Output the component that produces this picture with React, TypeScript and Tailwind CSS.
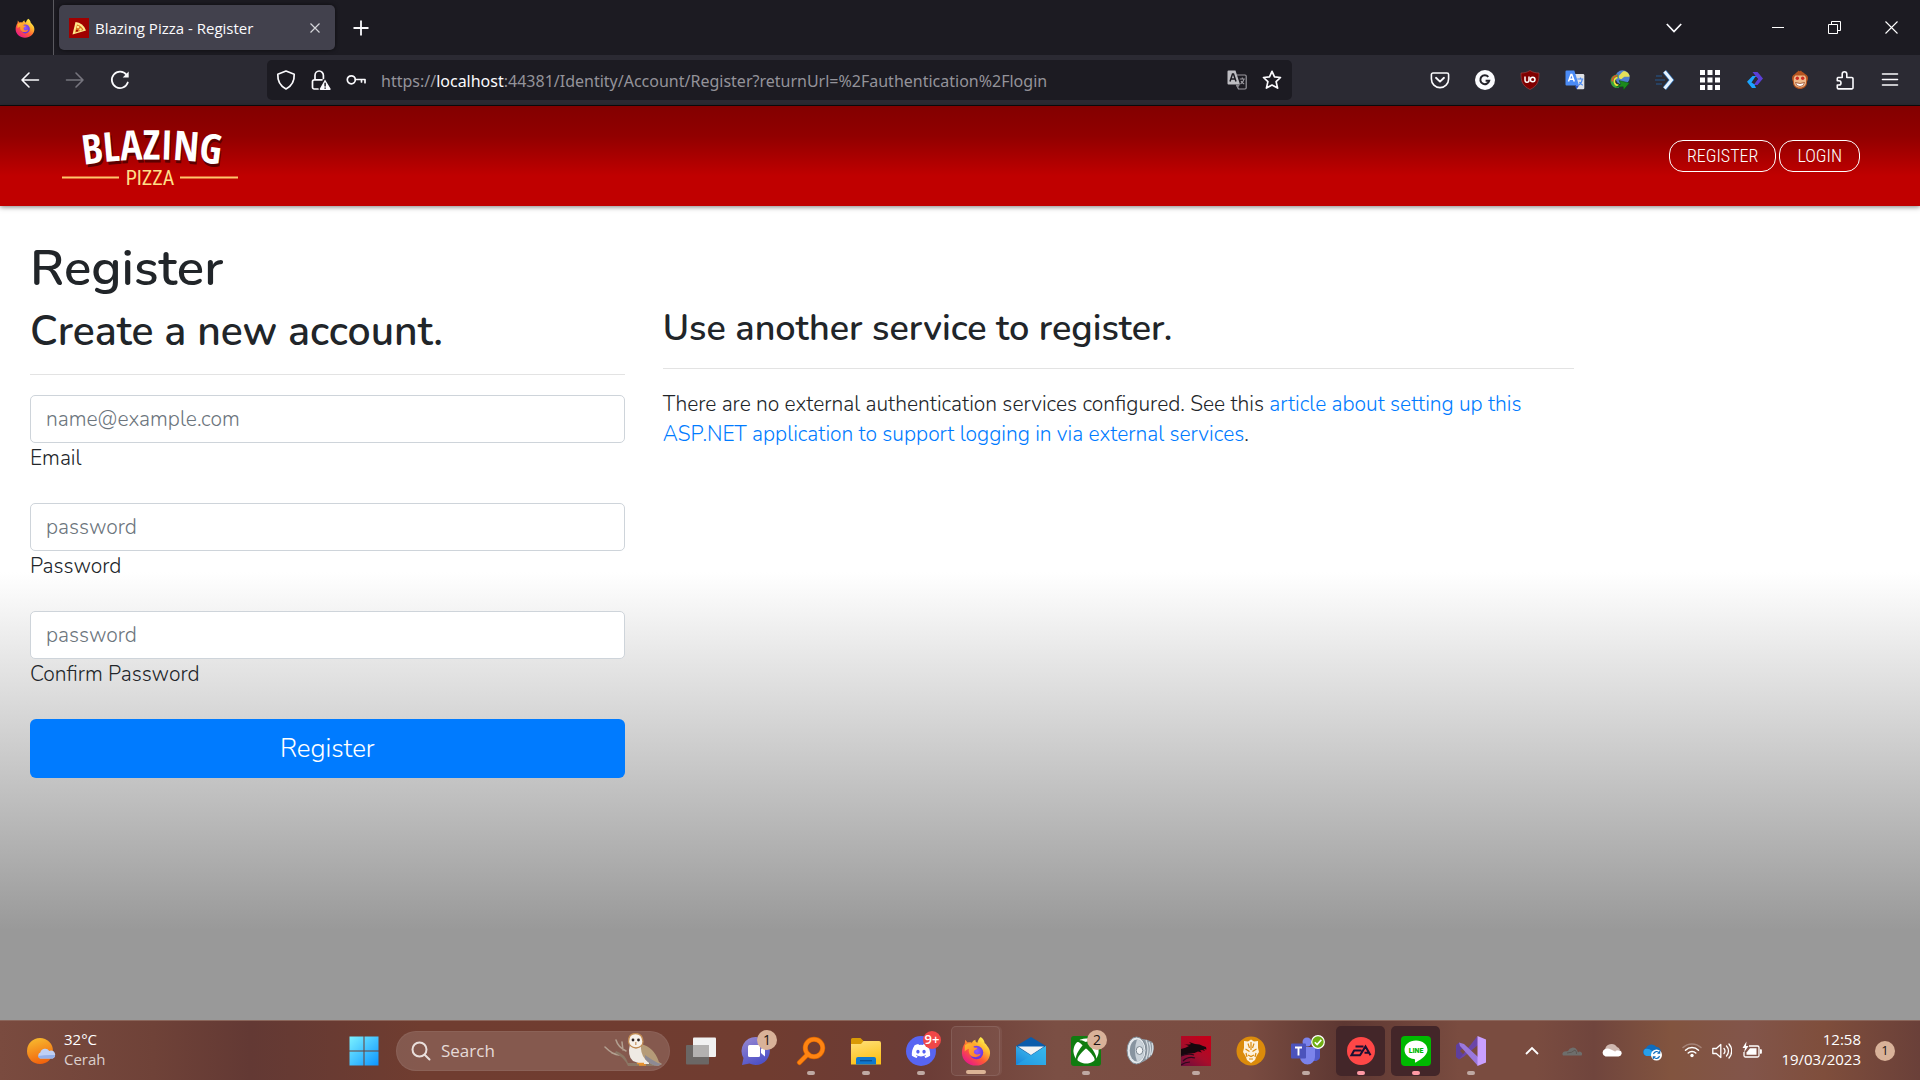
import React from "react";
import type { ReactNode } from "react";
import { FaDiscord, FaXbox } from "react-icons/fa";

const ICON = "h-5 w-5 shrink-0";

/* ---------- Browser icons ---------- */

function FirefoxIcon({ id, className }: { id: string; className: string }) {
  return (
    <svg viewBox="0 0 32 32" className={className} aria-hidden="true">
      <defs>
        <linearGradient id={id + "a"} x1="0.85" y1="0.1" x2="0.2" y2="0.95">
          <stop offset="0" stopColor="#fff44f" />
          <stop offset="0.3" stopColor="#ffb52e" />
          <stop offset="0.6" stopColor="#ff5a36" />
          <stop offset="1" stopColor="#e8178a" />
        </linearGradient>
        <radialGradient id={id + "b"} cx="0.5" cy="0.4" r="0.7">
          <stop offset="0" stopColor="#9059ff" />
          <stop offset="1" stopColor="#5b2bd8" />
        </radialGradient>
        <linearGradient id={id + "c"} x1="0" y1="0" x2="0.8" y2="1">
          <stop offset="0" stopColor="#ffbd2e" />
          <stop offset="1" stopColor="#ff7a2e" />
        </linearGradient>
      </defs>
      <path d="M21 1c2.500 1.700 4 4 4.300 6.800 1.300.700 2 1.700 2.400 2.700C29.600 12.500 31 15 31 18c0 7.600-6.700 13.500-15 13.500S1 25.500 1 18c0-4 1-7 3-10l.500-4 2.500 3c1.500-.600 3-.400 4.600.100C12.500 5.500 13.600 4.600 15.500 4c-.5 1.500.2 2.500 2 3.300C18 5 19 2.800 21 1z" fill={"url(#" + id + "a)"} />
      <circle cx="16.500" cy="17.500" r="7.200" fill={"url(#" + id + "b)"} />
      <path d="M4 10c2.500-2.200 5-2.600 7.500-1.600 1.500-.6 3.500-.4 4.500.6-1.500.5-2.500 1.500-2.800 2.600 1 .9 3 .7 4.300.9-.3 1.600-2.500 2-3.500 3.200-.8 1.500.2 3.800 2.500 4.100 2 .2 3-1.100 4.500-.8-1 2.500-4 3.800-6.500 3.500-5-.500-7-5-6-9-1.800.5-3 1.500-4.500 3z" fill={"url(#" + id + "c)"} />
    </svg>
  );
}

function PizzaFavicon() {
  return (
    <svg viewBox="0 0 20 20" className={ICON} aria-hidden="true">
      <rect width="20" height="20" fill="#a00000" />
      <path d="M6.500 4 Q14 4.500 17 12.500 L3.500 16.500 Z" fill="#ffe88a" />
      <path d="M8 6.500 Q12.500 7.500 14.500 12 L6 14.500 Z" fill="#d9741f" />
      <circle cx="9" cy="9" r="1.300" fill="#ffe88a" />
      <circle cx="11.500" cy="11.500" r="1.200" fill="#ffe88a" />
      <circle cx="8" cy="12.800" r="1" fill="#9c0000" />
    </svg>
  );
}

function Line({ d, w = 1.6, color = "#fbfbfe", children }: { d: string; w?: number; color?: string; children?: ReactNode }) {
  return (
    <svg viewBox="0 0 20 20" className={ICON} fill="none" stroke={color} strokeWidth={w} strokeLinecap="round" strokeLinejoin="round" aria-hidden="true">
      <path d={d} />
      {children}
    </svg>
  );
}

const BackIcon = () => <Line d="M18.500 10H2M9 3 2 10l7 7" />;
const ForwardIcon = () => <Line d="M1.500 10H18M11 3l7 7-7 7" color="#76757e" />;
const ReloadIcon = () => (
  <Line d="M17.800 12.500A8.200 8.200 0 1 1 16.500 4.800" w={1.8}>
    <path d="M18.700 1.500v6h-6z" fill="#fbfbfe" stroke="none" />
  </Line>
);
const ShieldIcon = () => <Line d="M10 1 1.800 4.200C1.500 10 3.500 15.500 10 19c6.500-3.500 8.500-9 8.200-14.800z" w={1.7} />;
const LockWarnIcon = () => (
  <svg viewBox="0 0 20 20" className={ICON} fill="none" stroke="#fbfbfe" strokeWidth="1.700" strokeLinecap="round" strokeLinejoin="round" aria-hidden="true">
    <path d="M7 19H3.200A1.700 1.700 0 0 1 1.500 17.300V11.500A1.700 1.700 0 0 1 3.200 9.800H11M4 9.500V5.500a4.200 4.500 0 0 1 8.400 0v3" />
    <path d="M14 9.500 8.800 18.700a.8.800 0 0 0 .7 1.200h9.400a.8.800 0 0 0 .7-1.200z" fill="#fbfbfe" stroke="none" />
    <path d="M14.100 13.200v2.800M14.100 18v.2" stroke="#1c1b22" strokeWidth="1.500" />
  </svg>
);
const KeyIcon = () => (
  <Line d="M9.500 9.500H19v3.200M15.500 9.500v2.500" w={1.7}>
    <circle cx="5.300" cy="9.800" r="4" />
  </Line>
);
const PageTranslateIcon = () => (
  <svg viewBox="0 0 20 20" className={ICON} aria-hidden="true">
    <path d="M10 5h8a1.200 1.200 0 0 1 1.200 1.200v11.600A1.200 1.200 0 0 1 18 19h-6.500l-2-4" fill="none" stroke="#9b9aa0" strokeWidth="1.200" />
    <path d="M1.500.500h7L13 14.500H1.500a1 1 0 0 1-1-1v-12a1 1 0 0 1 1-1z" fill="#bdbdc2" />
    <path d="M9 14.500h4L10.500 18.500z" fill="#88878e" />
    <path d="M3 11.500 5.500 4h1L9 11.500M4 9h4" fill="none" stroke="#1c1b22" strokeWidth="1.500" />
    <path d="M12.800 9h5M15.300 7.500V9M17 9c-.3 2.500-2 4-3.500 5M14 11c.6 1.300 1.800 2.300 3.200 3" fill="none" stroke="#9b9aa0" strokeWidth="1.100" />
  </svg>
);
const StarIcon = () => <Line d="M10 1.300l2.500 5.500 6 .7-4.400 4.100 1.500 6.500L10 15l-5.600 3.100 1.500-6.500L1.500 7.500l6-.7z" w={1.7} />;
const PocketIcon = () => (
  <Line d="M3 3h14a1.600 1.600 0 0 1 1.600 1.600v4.400a8.600 8.600 0 0 1-17.200 0V4.600A1.600 1.600 0 0 1 3 3z" w={1.6}>
    <path d="M6 7.800l4 3.800 4-3.800" strokeWidth="1.900" />
  </Line>
);
const GrammarlyIcon = () => (
  <svg viewBox="0 0 20 20" className={ICON} aria-hidden="true">
    <circle cx="10" cy="10" r="10" fill="#fbfbfe" />
    <path d="M13.300 6.800A4.500 4.500 0 1 0 14.200 10.800H10.600" fill="none" stroke="#222129" strokeWidth="2" />
  </svg>
);
const UblockIcon = () => (
  <svg viewBox="0 0 20 20" className={ICON} aria-hidden="true">
    <path d="M10 .500C7 2.500 4 3 1 3c0 8 1 12.500 9 16.500C18 15.500 19 11 19 3c-3 0-6-.500-9-2.500z" fill="#800000" stroke="#a84a4a" strokeWidth="0.600" />
    <path d="M5 6.500v3.800a2 2 0 0 0 4 0V6.500" fill="none" stroke="#fff" strokeWidth="1.500" />
    <circle cx="12.700" cy="9.500" r="2.300" fill="none" stroke="#fff" strokeWidth="1.500" />
  </svg>
);
const GTranslateIcon = () => (
  <svg viewBox="0 0 20 20" className={ICON} aria-hidden="true">
    <path d="M8 4h10a1.300 1.300 0 0 1 1.300 1.300V18a1.300 1.300 0 0 1-1.300 1.300h-6z" fill="#dfe1e5" />
    <path d="M1.500.500h7.800L14 15.500H1.500a1 1 0 0 1-1-1v-13a1 1 0 0 1 1-1z" fill="#4b8bf5" />
    <path d="M10 15.500h4l-2.500 4z" fill="#2a56c6" />
    <path d="M3.500 11.500 6 4.500h.8L9.300 11.500M4.500 9.300h3.800" fill="none" stroke="#fff" strokeWidth="1.500" />
    <path d="M12.300 9h6M15.500 7.500V9M17.300 9c-.3 3-1.800 5-3.300 6M14.500 12c.8 1.500 2 2.500 3.300 3.200" fill="none" stroke="#4b8bf5" strokeWidth="1.200" />
  </svg>
);
const IdmIcon = () => (
  <svg viewBox="0 0 20 20" className={ICON} aria-hidden="true">
    <circle cx="12.500" cy="7.500" r="7.200" fill="#4f7fd0" />
    <path d="M14 1c3.500.500 5.500 3 5.700 5.500-2 1-4-.5-5.700.5s-2 2.500-3.500 2-2.500-2.500-1-4S12 2 14 1z" fill="#e4e05a" />
    <path d="M8 4.500C3 4 0 8 .600 12c.6 4.200 4.200 6.500 8.400 6v-3.500c-2.500.3-4.500-1-4.700-3.200C4 9 6 7.500 8.500 7.800z" fill="#3da53a" />
    <path d="M7.500 5.500C4 6 2 8.500 2.300 11.500" fill="none" stroke="#e8502e" strokeWidth="1.600" />
    <path d="M7.500 7.500C5 8.200 4 10 4.500 12.500c.5 1.800 2 3 4 3" fill="none" stroke="#f4e13c" strokeWidth="1.600" />
    <path d="M9 10.500l10.500 2.500-6 7-.3-3.200L6.500 17l4.300-3z" fill="#1c8a1c" stroke="#0b4a12" strokeWidth="0.500" />
  </svg>
);
const ArrowExtIcon = () => (
  <svg viewBox="0 0 20 20" className={ICON} fill="none" aria-hidden="true">
    <path d="M1 6h6M0 10h10M1 14h6" stroke="#274a73" strokeWidth="1.700" />
    <path d="M9.500 1.500 16.500 10l-7 8.500" stroke="#2a6bb0" strokeWidth="4.400" />
    <path d="M9.500 1.500 16.500 10l-7 8.500" stroke="#e8f4ff" strokeWidth="3" />
  </svg>
);
const GridExtIcon = () => (
  <svg viewBox="0 0 20 20" className={ICON} fill="#fff" aria-hidden="true">
    {[0, 7.5, 15].map((y) => [0, 7.5, 15].map((x) => <rect key={x + "-" + y} x={x} y={y} width="5" height="5" />))}
  </svg>
);
const BoltExtIcon = () => (
  <svg viewBox="0 0 20 20" className={ICON} aria-hidden="true">
    <path d="M7.500 2h5L18 8.500l-5.500 6.500h-4L13 9z" fill="#5b3fd6" />
    <path d="M7.500 6h4L8 11.500l3 6.500H7L2 11.800z" fill="#1ba4ff" />
    <path d="M10.500 6.500 13 9l-4 5-2.500-1.500z" fill="#2b2a33" />
  </svg>
);
const MonkeyExtIcon = () => (
  <svg viewBox="0 0 20 20" className={ICON} aria-hidden="true">
    <path d="M5 4c1-1.500 2.500-1.800 3.500-3.500.5 1 1.500 1 2.500 0 .5 1.700 3 1.800 4 3.500 1 .5 3 1.500 3 4s-1 2.500-1 4.500c0 4-3.500 6.500-7 6.500s-7-2.500-7-6.500c0-2-1-2-1-4.500S4 4.500 5 4z" fill="#b5541f" />
    <path d="M5.500 5.500h9c2.500 2 1.500 5 1.500 7 0 3-3 5-6 5s-6-2-6-5c0-2-1-5 1.500-7z" fill="#efb98a" />
    <circle cx="7.300" cy="8.300" r="1.700" fill="#d02a20" />
    <circle cx="12.700" cy="8.300" r="1.700" fill="#d02a20" />
    <path d="M5.500 12.500q4.500 2 9 0-.5 4-4.500 4t-4.500-4z" fill="#fff" stroke="#8c3a15" strokeWidth="0.700" />
  </svg>
);
const PuzzleIcon = () => (
  <Line d="M3 7.500h4.200V4a2.300 2.300 0 0 1 4.600 0v3.500h5a1.200 1.200 0 0 1 1.200 1.200v9a1.200 1.200 0 0 1-1.200 1.200H3.500A1.200 1.200 0 0 1 2.300 17.700V15h1.600a2.100 2.100 0 0 0 0-4.200H2.300V8.500A1 1 0 0 1 3 7.500z" w={1.6} />
);
const MenuIcon = () => <Line d="M2.500 4h15M2.500 9.500h15M2.500 15h15" w={1.6} />;

function ToolButton({ label, children }: { label: string; children: ReactNode }) {
  return (
    <button type="button" aria-label={label} className="flex h-10 w-[45px] shrink-0 items-center justify-center">
      {children}
    </button>
  );
}

function TabStrip() {
  return (
    <div className="flex h-[55px] bg-[#1c1b22] text-[#fbfbfe]">
      <button type="button" aria-label="Firefox View" className="flex w-[54px] shrink-0 items-center justify-center border-r border-[#5a595f] pr-1">
        <FirefoxIcon id="ffTab" className="h-5 w-5" />
      </button>
      <div className="my-[5px] ml-[5px] flex w-[276px] items-center gap-[6px] rounded-[5px] bg-[#42414d] pr-[10px] pl-[10px] shadow-[0_0_4px_rgba(0,0,0,0.6)]">
        <PizzaFavicon />
        <span className="flex-1 truncate text-[15px] leading-5">Blazing Pizza - Register</span>
        <button type="button" aria-label="Close tab" className="flex h-5 w-5 items-center justify-center">
          <svg viewBox="0 0 10 10" className="h-[10px] w-[10px]" stroke="#d5d5da" strokeWidth="1.200" aria-hidden="true">
            <path d="M.500.500l9 9M9.500.500l-9 9" />
          </svg>
        </button>
      </div>
      <button type="button" aria-label="New tab" className="flex w-[52px] items-center justify-center">
        <svg viewBox="0 0 16 16" className="h-4 w-4" stroke="#fbfbfe" strokeWidth="1.800" aria-hidden="true">
          <path d="M8 .500v15M.500 8h15" />
        </svg>
      </button>
      <div className="flex-1" />
      <button type="button" aria-label="List all tabs" className="mr-[53px] flex w-[45px] items-center justify-center">
        <svg viewBox="0 0 16 10" className="h-[10px] w-4" fill="none" stroke="#fbfbfe" strokeWidth="1.700" aria-hidden="true">
          <path d="M.800 1l7.200 7.500L15.200 1" />
        </svg>
      </button>
      <button type="button" aria-label="Minimize" className="flex w-[57px] items-center justify-center">
        <span className="h-px w-3 bg-white" />
      </button>
      <button type="button" aria-label="Restore" className="flex w-[57px] items-center justify-center">
        <svg viewBox="0 0 13 13" className="h-[13px] w-[13px]" fill="none" stroke="#fff" aria-hidden="true">
          <path d="M.500 3.500h9v9h-9zM3.500 3.500v-3h9v9h-3" />
        </svg>
      </button>
      <button type="button" aria-label="Close window" className="flex w-[57px] items-center justify-center">
        <svg viewBox="0 0 13 13" className="h-[13px] w-[13px]" stroke="#fff" strokeWidth="1.100" aria-hidden="true">
          <path d="M.500.500l12 12M12.500.500l-12 12" />
        </svg>
      </button>
    </div>
  );
}

function Toolbar() {
  return (
    <div className="flex h-[51px] items-start border-b border-[#0c0c0d] bg-[#2b2a33] pt-[5px] pr-2 pl-[7px]">
      <ToolButton label="Back"><BackIcon /></ToolButton>
      <ToolButton label="Forward"><ForwardIcon /></ToolButton>
      <ToolButton label="Reload"><ReloadIcon /></ToolButton>
      <div className="flex-[5]" />
      <div className="min-w-0 flex-[41]">
        <div className="flex h-10 items-center gap-[15px] rounded-[5px] bg-[#1c1b22] pr-[10px] pl-[9px]">
          <ShieldIcon />
          <LockWarnIcon />
          <KeyIcon />
          <div className="min-w-0 flex-1 truncate pt-[2px] font-['Noto_Sans','Open_Sans',sans-serif] text-base text-[#94939a]">
            https://<span className="text-[#fbfbfe]">localhost</span>:44381/Identity/Account/Register?returnUrl=%2Fauthentication%2Flogin
          </div>
          <PageTranslateIcon />
          <StarIcon />
        </div>
      </div>
      <div className="flex-[5]" />
      <ToolButton label="Save to Pocket"><PocketIcon /></ToolButton>
      <ToolButton label="Grammarly"><GrammarlyIcon /></ToolButton>
      <ToolButton label="uBlock"><UblockIcon /></ToolButton>
      <ToolButton label="Translate"><GTranslateIcon /></ToolButton>
      <ToolButton label="Download manager"><IdmIcon /></ToolButton>
      <ToolButton label="Redirector"><ArrowExtIcon /></ToolButton>
      <ToolButton label="Grid"><GridExtIcon /></ToolButton>
      <ToolButton label="Shortener"><BoltExtIcon /></ToolButton>
      <ToolButton label="Monkey"><MonkeyExtIcon /></ToolButton>
      <ToolButton label="Extensions"><PuzzleIcon /></ToolButton>
      <ToolButton label="Menu"><MenuIcon /></ToolButton>
    </div>
  );
}

/* ---------- Page ---------- */

function Logo() {
  return (
    <svg viewBox="0 -8 176 80" className="h-20 w-44 overflow-visible" role="img" aria-label="Blazing Pizza">
      <defs>
        <path id="logoArc" d="M14 42 Q90 29 166 42" />
      </defs>
      <text
        fill="#fff"
        fontFamily="'Open Sans Condensed','Roboto Condensed',sans-serif"
        fontWeight="700"
        fontSize="41"
        textAnchor="middle"
        className="[text-shadow:1px_3px_0_#5c0000]"
      >
        <textPath href="#logoArc" startOffset="50%">BLAZING</textPath>
      </text>
      <text x="88" y="61" textAnchor="middle" fontFamily="'Roboto Condensed',Roboto,sans-serif" fontSize="20" fill="#ffe08a">PIZZA</text>
      <path d="M0 53.500h57M118 53.500h58" stroke="#ffc56b" strokeWidth="2" />
    </svg>
  );
}

function NavLink({ children }: { children: ReactNode }) {
  return (
    <a href="#" className="flex h-8 items-center rounded-[14px] border border-white px-[17px] font-['Roboto_Condensed',Roboto,sans-serif] text-lg leading-none font-light text-white">
      {children}
    </a>
  );
}

function Field({ id, label, placeholder, type }: { id: string; label: string; placeholder: string; type: string }) {
  return (
    <div className="mb-[30px] flex flex-col">
      <input
        id={id}
        type={type}
        placeholder={placeholder}
        className="h-12 w-full rounded-[5px] border border-[#ced4da] bg-white px-[15px] placeholder:text-[#6c757d] placeholder:opacity-100"
      />
      <label htmlFor={id} className="leading-[30px]">{label}</label>
    </div>
  );
}

function Page() {
  return (
    <div className="flex flex-1 flex-col bg-white text-[#212529]">
      <header className="relative flex h-[100px] items-center justify-between bg-[linear-gradient(to_bottom,#830000_0%,#910000_30%,#c00000_70%)] pr-[60px] pl-[62px] shadow-[0_1px_5px_rgba(0,0,0,0.5)]">
        <a href="#"><Logo /></a>
        <nav className="flex gap-[3px]">
          <NavLink>REGISTER</NavLink>
          <NavLink>LOGIN</NavLink>
        </nav>
      </header>
      <main className="flex-1 bg-[linear-gradient(to_bottom,#ffffff_45%,#999999_89%)] px-[11px] pt-8 font-['Nunito',Lato,sans-serif] text-[21px] leading-[30px] font-light">
        <h1 className="mb-[10px] px-[19px] text-[51px] leading-[60px] font-semibold">Register</h1>
        <div className="grid grid-cols-12">
          <form className="col-span-4 px-[19px]" onSubmit={(e) => e.preventDefault()}>
            <h2 className="text-[41px] leading-[48px] font-semibold">Create a new account.</h2>
            <hr className="mt-[18px] mb-5 border-t border-[#e3e3e3]" />
            <Field id="email" type="email" label="Email" placeholder="name@example.com" />
            <Field id="password" type="password" label="Password" placeholder="password" />
            <Field id="confirm" type="password" label="Confirm Password" placeholder="password" />
            <button type="submit" className="h-[59px] w-full rounded-md bg-[#007bff] text-[26px] text-white">
              Register
            </button>
          </form>
          <section className="col-span-6 px-[19px]">
            <h3 className="text-[36px] leading-[42px] font-semibold">Use another service to register.</h3>
            <hr className="mt-[18px] mb-5 border-t border-[#e3e3e3]" />
            <p>
              There are no external authentication services configured. See this{" "}
              <a href="#" className="text-[#007bff]">
                article about setting up this ASP.NET application to support logging in via external services
              </a>.
            </p>
          </section>
        </div>
      </main>
    </div>
  );
}

/* ---------- Taskbar ---------- */

type TaskProps = { label: string; running?: "idle" | "active" | "alert"; framed?: boolean; dark?: boolean; badge?: ReactNode; children: ReactNode };

function Task({ label, running, framed, dark, badge, children }: TaskProps) {
  return (
    <button
      type="button"
      aria-label={label}
      className={
        "relative mx-[3px] flex h-[50px] w-[49px] shrink-0 items-center justify-center rounded-[5px] " +
        (dark ? "bg-[#432629]" : framed ? "border border-white/10 bg-white/5 shadow-[2px_0_0_rgba(255,255,255,0.06)]" : "")
      }
    >
      {children}
      {badge}
      {running && (
        <span
          className={
            "absolute bottom-[1px] left-1/2 h-1 -translate-x-1/2 rounded-full " +
            (running === "active" ? "w-5 bg-[#dcb496]" : running === "alert" ? "w-2 bg-[#ff99a4]" : "w-2 bg-[#bfa9a3]")
          }
        />
      )}
    </button>
  );
}

function Badge({ children, red }: { children: ReactNode; red?: boolean }) {
  return (
    <span
      className={
        "absolute flex items-center justify-center rounded-full leading-none " +
        (red ? "top-[5px] right-[4px] h-[18px] w-[18px] bg-[#f04747] text-[13px] font-semibold text-white" : "top-[4px] right-[3px] h-5 w-5 bg-[#d9b299] text-[14px] text-[#1d1512]")
      }
    >
      {children}
    </span>
  );
}

const TASK_ICON = "h-[30px] w-[30px]";

function WindowsIcon() {
  return (
    <svg viewBox="0 0 30 30" className={TASK_ICON} aria-hidden="true">
      <defs>
        <linearGradient id="win" x1="0" y1="0" x2="30" y2="30" gradientUnits="userSpaceOnUse">
          <stop offset="0" stopColor="#7df3ff" />
          <stop offset="1" stopColor="#0a93ff" />
        </linearGradient>
      </defs>
      <path d="M.500.500h14v14h-14zM15.500.500h14v14h-14zM.500 15.500h14v14h-14zM15.500 15.500h14v14h-14z" fill="url(#win)" />
    </svg>
  );
}

function OwlIcon() {
  return (
    <svg viewBox="0 0 60 36" className="h-9 w-[60px]" aria-hidden="true">
      <path d="M1 14q8 8 14 8M8 20l8 2M12 7q2 7 10 11M18 9l1 8" fill="none" stroke="#b3a091" strokeWidth="1.500" strokeLinecap="round" />
      <path d="M12 18q9 3 12 12h30l-3 3H24Q20 24 11 20z" fill="#8b7765" />
      <path d="M26 11q-3 12 3 17l8 3h8q1-14-7-20z" fill="#efeae4" />
      <path d="M37 11q13 3 18 18l3 2-4 2q-8-1-13-7-5-6-4-15z" fill="#b59b78" />
      <path d="M41 22q7 5 13 8l4 1-4 2q-8-1-13-7z" fill="#8d8a93" />
      <path d="M24.500 8.500q0-8 7-8t7.500 8q0 5.500-7 6.500-7-1-7.500-6.500z" fill="#f7f1ea" stroke="#c08a52" strokeWidth="1.300" />
      <circle cx="29" cy="7" r="1.400" fill="#2d2220" />
      <circle cx="34.500" cy="7" r="1.400" fill="#2d2220" />
      <path d="M31.800 9v3" stroke="#c99a6a" strokeWidth="1.300" />
      <path d="M33 30.500h7M35 32h7" stroke="#e5902f" strokeWidth="1.500" />
    </svg>
  );
}

function TaskViewIcon() {
  return (
    <svg viewBox="0 0 30 30" className={TASK_ICON} aria-hidden="true">
      <rect x="0" y="9" width="23" height="19.500" rx="1" fill="#6b6765" />
      <rect x="7" y="1.500" width="23" height="19.500" rx="1" fill="#f1f1f1" />
      <rect x="7" y="9" width="16" height="12" fill="#b3b1b0" />
    </svg>
  );
}

function ChatIcon() {
  return (
    <svg viewBox="0 0 30 30" className={TASK_ICON} aria-hidden="true">
      <defs>
        <linearGradient id="chat" x1="0" y1="0" x2="0.500" y2="1">
          <stop offset="0" stopColor="#9a8ad0" />
          <stop offset="1" stopColor="#4f52c8" />
        </linearGradient>
      </defs>
      <path d="M15 1a14 14 0 1 1-6.500 26.500L1 29l1.500-7A14 14 0 0 1 15 1z" fill="url(#chat)" />
      <rect x="7" y="9" width="12" height="12" rx="1.500" fill="#fff" />
      <path d="M20 13l4-3.500v11L20 17z" fill="#fff" />
    </svg>
  );
}

function EverythingIcon() {
  return (
    <svg viewBox="0 0 30 30" className={TASK_ICON} fill="none" strokeLinecap="round" aria-hidden="true">
      <path d="M12 18 3.500 26.500" stroke="#d76400" strokeWidth="5" />
      <circle cx="18" cy="12" r="8.700" stroke="#d76400" strokeWidth="5" />
      <path d="M12 18 3.500 26.500" stroke="#ff8412" strokeWidth="3.800" />
      <circle cx="18" cy="12" r="8.700" stroke="#ff8412" strokeWidth="3.800" />
    </svg>
  );
}

function ExplorerIcon() {
  return (
    <svg viewBox="0 0 30 30" className={TASK_ICON} aria-hidden="true">
      <defs>
        <linearGradient id="folder" x1="0" y1="0" x2="0.300" y2="1">
          <stop offset="0" stopColor="#ffe07a" />
          <stop offset="1" stopColor="#fcc21b" />
        </linearGradient>
      </defs>
      <path d="M0 3.500A1.500 1.500 0 0 1 1.500 2h8l3 3v4H0z" fill="#d99a06" />
      <path d="M0 8h10l2.500-3H28a2 2 0 0 1 2 2v21.500H0z" fill="url(#folder)" />
      <path d="M5 28.500V23a2 2 0 0 1 2-2h16a2 2 0 0 1 2 2v5.500z" fill="#0f78cd" />
      <path d="M9 24.700h12" stroke="#0a4f92" strokeWidth="1.300" />
    </svg>
  );
}

function DiscordIcon() {
  return (
    <span className="flex h-[30px] w-[30px] items-center justify-center rounded-full bg-[#5865f2]">
      <FaDiscord className="h-5 w-5 text-white" />
    </span>
  );
}

function MailIcon() {
  return (
    <svg viewBox="0 0 30 30" className={TASK_ICON} aria-hidden="true">
      <defs>
        <linearGradient id="mail" x1="0" y1="1" x2="1" y2="0">
          <stop offset="0" stopColor="#1683d8" />
          <stop offset="1" stopColor="#4fd0f7" />
        </linearGradient>
      </defs>
      <path d="M0 10 15 1l15 9-15 10z" fill="#0b5cab" />
      <path d="M0 10l15 9.500L30 10v19H0z" fill="url(#mail)" />
      <path d="M2 10.500h26L15 19z" fill="#f3f3f3" />
      <path d="M0 29 15 19.500 30 10v19z" fill="#2aa9e8" fillOpacity="0.600" />
    </svg>
  );
}

function XboxIcon() {
  return (
    <span className="flex h-[30px] w-[30px] items-center justify-center rounded-[3px] bg-[#107c10]">
      <FaXbox className="h-[26px] w-[26px] text-white" />
    </span>
  );
}

function SpeakerIcon() {
  return (
    <svg viewBox="0 0 30 30" className={TASK_ICON} aria-hidden="true">
      <path d="M14 3q9 0 13 4 2 6-1 12-4 5-12 8z" fill="#8e99a3" />
      <path d="M20 4q4 9 0 19M23 6q3 7 0 15M26 7q2 6-1 12" fill="none" stroke="#d5dce1" strokeWidth="1.300" />
      <ellipse cx="10.500" cy="14.500" rx="9.500" ry="13.500" fill="#e3e8ec" stroke="#7f8a94" strokeWidth="1" />
      <ellipse cx="11" cy="14.500" rx="7.300" ry="11" fill="#8794a0" />
      <path d="M11 3.500a7.300 11 0 0 1 0 22q-4-11 0-22z" fill="#c9d2d9" />
      <ellipse cx="13.500" cy="14.500" rx="3.300" ry="4" fill="#f1f4f6" stroke="#7b8791" strokeWidth="1" />
    </svg>
  );
}

function DragonIcon() {
  return (
    <svg viewBox="0 0 30 30" className={TASK_ICON} aria-hidden="true">
      <defs>
        <linearGradient id="dragon" x1="0" y1="1" x2="0.700" y2="0">
          <stop offset="0" stopColor="#6a0d3f" />
          <stop offset="0.500" stopColor="#a80d2a" />
          <stop offset="1" stopColor="#c4001a" />
        </linearGradient>
      </defs>
      <rect width="30" height="30" fill="url(#dragon)" />
      <path d="M0 13q5-1 8-3l-5-2q4 1 7 0l-2-2 6 2q5 0 8 2l3 1 .500 2.500-3-.500 1.500 2-3-1-2 .500 2 2-4-1q-3 2-8 2-5 0-9 3z" fill="#16070d" />
      <path d="M0 20q7-3 13-1M2 25q5-5 12-3M0 29q4-3 9-3" fill="none" stroke="#2a0a1c" strokeWidth="1.200" />
    </svg>
  );
}

function LionIcon() {
  return (
    <svg viewBox="0 0 30 30" className={TASK_ICON} aria-hidden="true">
      <circle cx="15" cy="15" r="14.500" fill="#db8b0b" />
      <path d="M15 3.500l3 2 4-.500v7l1 4-2.500 4-1.500 4-4 3-4-3-1.500-4L7 16l1-4V5l4 .500z" fill="#fdf1dc" />
      <path d="M9.500 13l4 2.500M20.500 13l-4 2.500M15 6v8M12 7.500l1.500 4.500M18 7.500l-1.500 4.500M12 19l3 1.500 3-1.500M13 23h4M10 17l1 4M20 17l-1 4" stroke="#db8b0b" strokeWidth="1.200" fill="none" />
    </svg>
  );
}

function TeamsIcon() {
  return (
    <svg viewBox="0 0 30 30" className={TASK_ICON} aria-hidden="true">
      <circle cx="16" cy="6" r="4.500" fill="#7b83eb" />
      <path d="M21 12h8v9a5 5 0 0 1-8 3z" fill="#5059c9" />
      <path d="M9 11h15v10a7.500 7.500 0 0 1-15 0z" fill="#7b83eb" />
      <rect x="0" y="7.500" width="15" height="15" rx="1" fill="#4b53bc" />
      <path d="M4 11.500h7M7.500 11.500v8" stroke="#fff" strokeWidth="1.900" />
    </svg>
  );
}

function TeamsStatus() {
  return (
    <svg viewBox="0 0 14 14" className="absolute top-[9px] right-[5px] h-[14px] w-[14px]" aria-hidden="true">
      <circle cx="7" cy="7" r="6.300" fill="#6fae12" stroke="#fff" strokeWidth="1.200" />
      <path d="M3.800 7.200l2.300 2.300 4.200-4.600" fill="none" stroke="#fff" strokeWidth="1.600" />
    </svg>
  );
}

function EaIcon() {
  return (
    <svg viewBox="0 0 30 30" className={TASK_ICON} aria-hidden="true">
      <circle cx="15" cy="15" r="14" fill="#ff4747" />
      <path d="M9.500 10.500h8M7.500 14.500h8M14.500 19.200H5.500l2.600-4.700M14 19.200l5.500-8.700 5 8.700M18.500 16.700h5" fill="none" stroke="#1b1033" strokeWidth="2.100" />
    </svg>
  );
}

function LineIcon() {
  return (
    <svg viewBox="0 0 30 30" className={TASK_ICON} role="img" aria-label="LINE">
      <rect width="30" height="30" rx="4" fill="#00b900" />
      <path d="M15 4.500c6.600 0 11.500 4 11.500 9.300 0 5-5.500 9.200-11.800 12.700-.8.400-.8-.8-.7-1.500.2-1.200.1-1.700-1-1.900C7.500 22.500 3.500 18.700 3.500 13.800 3.500 8.500 8.400 4.500 15 4.500z" fill="#fff" />
      <text x="15" y="16.500" textAnchor="middle" fontFamily="Roboto, sans-serif" fontWeight="900" fontSize="7" fill="#00b900">LINE</text>
    </svg>
  );
}

function VisualStudioIcon() {
  return (
    <svg viewBox="0 0 30 30" className={TASK_ICON} aria-hidden="true">
      <path d="M0 9l3-2.500 5 4.500-4 4 4 4-5 4.500L0 21z" fill="#5f3f9c" />
      <path d="M3 23.500 21.500 0 22 9 8 20.500z" fill="#6b45a8" />
      <path d="M3 6.500 8 8l14 13v9L4 10z" fill="#9a78dc" />
      <path d="M21.500 0 30 3.500v23L21.500 30z" fill="#c9a0ff" />
    </svg>
  );
}

function WeatherIcon() {
  return (
    <svg viewBox="0 0 30 28" className="h-7 w-[30px]" aria-hidden="true">
      <defs>
        <linearGradient id="sun" x1="0.300" y1="0" x2="0.600" y2="1">
          <stop offset="0" stopColor="#f7b92e" />
          <stop offset="1" stopColor="#f2600c" />
        </linearGradient>
      </defs>
      <circle cx="13" cy="14" r="13" fill="url(#sun)" />
      <path d="M13 21.500a3.300 3.300 0 0 1 .3-6 5 5 0 0 1 9-1.500 3.800 3.800 0 0 1 3.500 7.500z" fill="#bfd0f5" />
      <path d="M13 21.500a3 3 0 0 1-2-2.500q8-1.500 17-1a3.500 3.500 0 0 1-2.500 3.500z" fill="#94b0ea" />
    </svg>
  );
}

function TrayCell({ wide, label, children }: { wide?: boolean; label: string; children: ReactNode }) {
  return (
    <button type="button" aria-label={label} className={"flex h-10 items-center justify-center " + (wide ? "w-10" : "w-[30px]")}>
      {children}
    </button>
  );
}

const CLOUD = "M4.500 15A4 4 0 0 1 4 7.200 6 6 0 0 1 14.500 6 4.600 4.600 0 0 1 15.500 15z";

function Tray() {
  return (
    <div className="ml-auto flex shrink-0 items-center pr-[25px] text-white">
      <TrayCell wide label="Show hidden icons">
        <svg viewBox="0 0 14 9" className="h-[9px] w-[14px]" fill="none" stroke="#fff" strokeWidth="1.800" aria-hidden="true"><path d="M1 8l6-6 6 6" /></svg>
      </TrayCell>
      <TrayCell wide label="Cloud sync off">
        <svg viewBox="0 0 20 20" className={ICON} aria-hidden="true">
          <path d="M1 14.500a2.500 2.500 0 0 1 1.500-4q2-.3 3.500-.5a5 5 0 0 1 9-1q.8 1.500 1 2.500a2.300 2.300 0 0 1 3.500 3z" fill="#6e6e6c" />
          <path d="M5 12q5 0 8-3 2 2 1.500 4" fill="none" stroke="#5b5350" strokeWidth="0.900" />
        </svg>
      </TrayCell>
      <TrayCell wide label="OneDrive">
        <svg viewBox="0 0 20 20" className={ICON} aria-hidden="true">
          <path d="M3 9a6.500 6.500 0 0 1 12-3q2 .500 3 3l-8 3z" fill="#cfb8b0" />
          <path d="M3.500 15.500A4 4 0 0 1 3 8q3-1 6 .5l4 2q2-2 5-1a3.200 3.200 0 0 1-1.500 6z" fill="#fff" />
        </svg>
      </TrayCell>
      <TrayCell wide label="OneDrive syncing">
        <svg viewBox="0 0 20 20" className={ICON} aria-hidden="true">
          <path d={CLOUD} fill="#0f6cbd" />
          <path d="M4.500 15A4 4 0 0 1 3 8q4-1 7 2l3 5z" fill="#28a0ea" />
          <circle cx="14.500" cy="14" r="5.500" fill="#fff" />
          <path d="M11.500 13a3.200 3.200 0 0 1 5.800-1M17.500 15a3.200 3.200 0 0 1-5.800 1M17.700 10v2.300h-2.300M11.300 18v-2.300h2.300" fill="none" stroke="#0f6cbd" strokeWidth="1.100" />
        </svg>
      </TrayCell>
      <div className="ml-[5px] flex">
        <TrayCell label="Wi-Fi">
          <svg viewBox="0 0 20 20" className={ICON} fill="none" strokeWidth="1.500" strokeLinecap="round" aria-hidden="true">
            <path d="M1 6.500a13 13 0 0 1 18 0" stroke="#a58378" />
            <path d="M3.500 9.300a9.200 9.200 0 0 1 13 0M6.200 12a5.400 5.400 0 0 1 7.600 0" stroke="#fff" />
            <circle cx="10" cy="14.500" r="1.700" fill="#fff" />
          </svg>
        </TrayCell>
        <TrayCell label="Volume">
          <svg viewBox="0 0 20 20" className={ICON} fill="none" stroke="#fff" strokeWidth="1.300" strokeLinecap="round" strokeLinejoin="round" aria-hidden="true">
            <path d="M.800 7.500h3.500l4.500-4v13l-4.500-4H.800zM12 7.500a4 4 0 0 1 0 5M14.500 5a7.300 7.300 0 0 1 0 10M17 3a10.500 10.500 0 0 1 0 14" />
          </svg>
        </TrayCell>
        <TrayCell label="Battery charging">
          <svg viewBox="0 0 20 20" className={ICON} fill="none" stroke="#fff" strokeWidth="1.300" strokeLinejoin="round" aria-hidden="true">
            <path d="M7 5h8.500A1.500 1.500 0 0 1 17 6.500v8a1.500 1.500 0 0 1-1.500 1.500h-12A1.500 1.500 0 0 1 2 14.500V11" />
            <path d="M18 9h1.200v3H18" fill="#fff" />
            <path d="M8 7.300h6.500v6.500H4.500V11.500z" fill="#fff" stroke="none" />
            <path d="M4.500.500.500 7H3l-1 4.500L6.500 5H4z" fill="#fff" stroke="none" />
          </svg>
        </TrayCell>
      </div>
      <button type="button" className="ml-[14px] pb-1 text-right text-[15px] leading-5">
        12:58<br />19/03/2023
      </button>
      <span className="ml-[14px] flex h-5 w-5 items-center justify-center rounded-full bg-[#d9b299] text-[13px] leading-none text-[#1d1512]">1</span>
    </div>
  );
}

function Taskbar() {
  return (
    <footer className="flex h-[60px] shrink-0 items-center border-t border-[#8a665b] bg-[linear-gradient(to_right,#7a4b3f_0%,#6f4238_8%,#633934_13%,#703d30_22%,#703c30_40%,#6b3c36_48%,#7b4f44_55%,#7a4c41_65%,#5d3732_70%,#7a4c40_76%,#7a4c40_80%,#70453d_83%,#82543f_87%,#82554a_91%,#7f4e3c_95%,#6a4039_100%)] font-['Open_Sans',sans-serif]">
      <button type="button" className="flex w-[336px] shrink-0 items-center gap-[7px] pl-[27px] text-left text-[15px] leading-5 text-white">
        <WeatherIcon />
        <span className="flex flex-col pb-1"><span>32°C</span><span className="text-white/75">Cerah</span></span>
      </button>
      <Task label="Start"><WindowsIcon /></Task>
      <label className="mr-[3px] ml-[5px] flex h-10 w-[274px] shrink-0 items-center rounded-full border border-white/5 bg-white/15 pr-[5px] pl-[14px]">
        <svg viewBox="0 0 20 20" className={ICON} fill="none" stroke="#e9dfdc" strokeWidth="2" strokeLinecap="round" aria-hidden="true">
          <circle cx="8.500" cy="8.500" r="7" />
          <path d="M13.700 13.700 18.500 18.500" />
        </svg>
        <input type="search" aria-label="Search" placeholder="Search" className="ml-[10px] w-0 flex-1 bg-transparent text-[17px] outline-none placeholder:text-[#e6dbd8] placeholder:opacity-100" />
        <OwlIcon />
      </label>
      <Task label="Task view"><TaskViewIcon /></Task>
      <Task label="Chat" badge={<Badge>1</Badge>}><ChatIcon /></Task>
      <Task label="Everything" running="idle"><EverythingIcon /></Task>
      <Task label="File Explorer" running="idle"><ExplorerIcon /></Task>
      <Task label="Discord" running="idle" badge={<Badge red>9+</Badge>}><DiscordIcon /></Task>
      <Task label="Firefox" running="active" framed><FirefoxIcon id="ffTask" className={TASK_ICON} /></Task>
      <Task label="Mail"><MailIcon /></Task>
      <Task label="Xbox" running="idle" badge={<Badge>2</Badge>}><XboxIcon /></Task>
      <Task label="Sound"><SpeakerIcon /></Task>
      <Task label="Dragon Center" running="idle"><DragonIcon /></Task>
      <Task label="Lion"><LionIcon /></Task>
      <Task label="Teams" running="idle" badge={<TeamsStatus />}><TeamsIcon /></Task>
      <Task label="EA" running="alert" dark><EaIcon /></Task>
      <Task label="LINE" running="alert" dark><LineIcon /></Task>
      <Task label="Visual Studio" running="idle"><VisualStudioIcon /></Task>
      <Tray />
    </footer>
  );
}

export default function App() {
  return (
    <div className="flex min-h-screen flex-col font-['Open_Sans',sans-serif]">
      <TabStrip />
      <Toolbar />
      <Page />
      <Taskbar />
    </div>
  );
}
